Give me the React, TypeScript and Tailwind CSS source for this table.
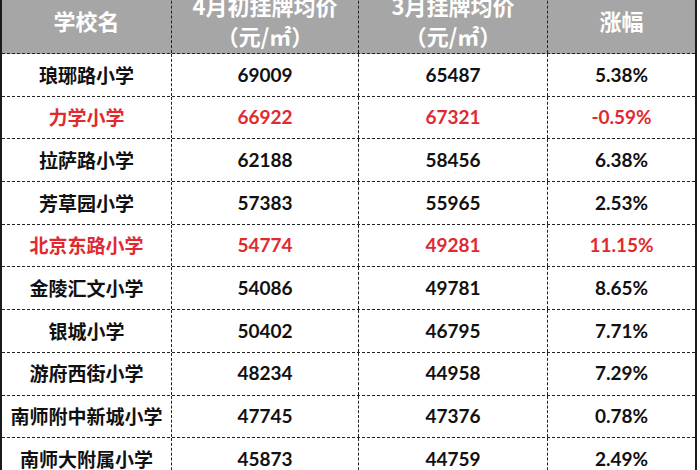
const rows = [
  { name: "琅琊路小学", apr: "69009", mar: "65487", pct: "5.38%" },
  { name: "力学小学", apr: "66922", mar: "67321", pct: "-0.59%", red: true },
  { name: "拉萨路小学", apr: "62188", mar: "58456", pct: "6.38%" },
  { name: "芳草园小学", apr: "57383", mar: "55965", pct: "2.53%" },
  { name: "北京东路小学", apr: "54774", mar: "49281", pct: "11.15%", red: true },
  { name: "金陵汇文小学", apr: "54086", mar: "49781", pct: "8.65%" },
  { name: "银城小学", apr: "50402", mar: "46795", pct: "7.71%" },
  { name: "游府西街小学", apr: "48234", mar: "44958", pct: "7.29%" },
  { name: "南师附中新城小学", apr: "47745", mar: "47376", pct: "0.78%" },
  { name: "南师大附属小学", apr: "45873", mar: "44759", pct: "2.49%" },
]

const grid = "grid grid-cols-[169px_187px_189px_148px]"
const cell = "flex items-center justify-center"
const sep = "border-l border-dashed border-[#222]"

export default function App() {
  return (
    <div className="w-[700px] h-[470px] overflow-hidden bg-white font-['Lato','Noto_Sans_CJK_SC',sans-serif] font-bold">
      <div className="w-[697px] border-x-2 border-[#1a1a1a] -mt-[14px]">
        <div className={`${grid} h-[68px] bg-[#a6a6a6] text-white text-[22px] leading-[30px] border-b border-dashed border-[#222] font-['Noto_Sans_CJK_SC',sans-serif]`}>
          <div className={cell}>学校名</div>
          <div className={`${cell} ${sep} flex-col`}>
            <span>4月初挂牌均价</span>
            <span>（元/㎡）</span>
          </div>
          <div className={`${cell} ${sep} flex-col`}>
            <span>3月挂牌均价</span>
            <span>（元/㎡）</span>
          </div>
          <div className={`${cell} ${sep}`}>涨幅</div>
        </div>
        {rows.map((r) => (
          <div
            key={r.name}
            className={`${grid} h-[42.7px] border-b border-dashed border-[#222] text-[19px] ${r.red ? "text-[#e02a2f]" : "text-[#111]"}`}
          >
            <div className={`${cell} font-['Noto_Sans_CJK_SC',sans-serif]`}>{r.name}</div>
            <div className={`${cell} ${sep}`}>{r.apr}</div>
            <div className={`${cell} ${sep}`}>{r.mar}</div>
            <div className={`${cell} ${sep}`}>{r.pct}</div>
          </div>
        ))}
      </div>
    </div>
  )
}
